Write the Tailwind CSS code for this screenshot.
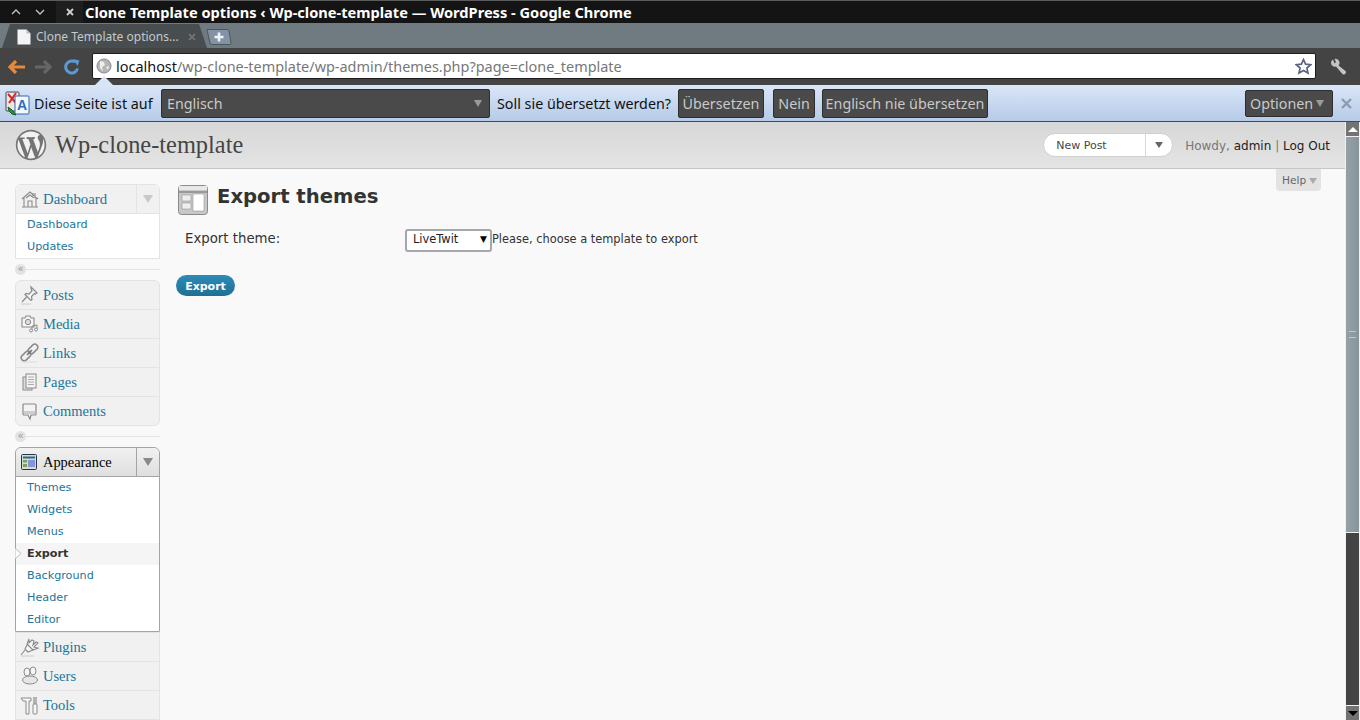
<!DOCTYPE html>
<html lang="en">
<head>
<meta charset="utf-8">
<title>Clone Template options</title>
<script src="https://cdn.jsdelivr.net/npm/@tailwindcss/browser@4"></script>
</head>
<body class="w-[1360px] h-[720px] overflow-hidden bg-[#f9f9f9] font-['Noto_Sans',sans-serif]">
<!-- title bar -->
<header class="h-[23px] bg-[#141414] border-t border-[#5c5c5c] flex items-center text-white">
  <div class="w-[56px] h-full flex items-center justify-around pl-1 pr-1 text-[#bbb]">
    <svg class="w-[10px] h-[6px]" viewBox="0 0 10 6"><path d="M1 5l4-4 4 4" fill="none" stroke="#c4c4c4" stroke-width="1.3"/></svg>
    <svg class="w-[10px] h-[6px]" viewBox="0 0 10 6"><path d="M1 1l4 4 4-4" fill="none" stroke="#c4c4c4" stroke-width="1.3"/></svg>
  </div>
  <div class="w-[27px] h-full flex items-center justify-center bg-[#1e1e1e]">
    <svg class="w-[8px] h-[8px]" viewBox="0 0 8 8"><path d="M1 1l6 6M7 1l-6 6" stroke="#d0d0d0" stroke-width="1.8"/></svg>
  </div>
  <span class="ml-[2px] text-[14.62px] font-bold whitespace-nowrap leading-none">Clone Template options ‹ Wp-clone-template — WordPress - Google Chrome</span>
</header>
<!-- tab strip -->
<div class="h-[25px] bg-[#6f7b80] flex items-end">
  <div class="ml-[2px] w-[205px] h-[24px] pt-[2px] bg-[#484d4f] [clip-path:polygon(0_100%,8px_0,197px_0,100%_100%)] flex items-center pl-[15px]">
    <svg class="w-[14px] h-[16px] shrink-0" viewBox="0 0 14 16"><path d="M0.5 0.5h9l4 4v11h-13z" fill="#f4f4f4"/><path d="M9.5 .5v4h4" fill="#bbb"/></svg>
    <span class="ml-[5px] text-[12px] text-[#c5c9ca] whitespace-nowrap">Clone Template options...</span>
    <svg class="ml-[9px] w-[8px] h-[8px]" viewBox="0 0 8 8"><path d="M1 1l6 6M7 1l-6 6" stroke="#777" stroke-width="1.6"/></svg>
  </div>
  <svg class="-ml-[1px] mb-[3px] w-[26px] h-[16px]" viewBox="0 0 26 16"><path d="M1 .5h20a2 2 0 0 1 2 1.500l2 12a1 1 0 0 1-1 1.500H6a2 2 0 0 1-2-1.500z" fill="#8492a6" stroke="#4d575b"/><path d="M13 3.500v9M8.500 8h9" stroke="#eef3fa" stroke-width="2.600"/></svg>
</div>
<!-- toolbar -->
<div class="h-[37px] bg-[#444444] flex items-center relative">
  <svg class="ml-[8px] w-[18px] h-[14px]" viewBox="0 0 18 14"><path d="M8 1L2 7l6 6M2 7h15" fill="none" stroke="#e58a3c" stroke-width="3.2"/></svg>
  <svg class="ml-[8px] w-[18px] h-[14px]" viewBox="0 0 18 14"><path d="M10 1l6 6-6 6M16 7H1" fill="none" stroke="#666" stroke-width="3.2"/></svg>
  <svg class="ml-[12px] w-[16px] h-[16px]" viewBox="0 0 16 16"><path d="M13.5 9.5A6 6 0 1 1 11 3" fill="none" stroke="#5a9ad6" stroke-width="3"/><path d="M9 0l6.500 1.500-2 5.500z" fill="#5a9ad6"/></svg>
  <div class="ml-[12px] w-[1224px] h-[26px] bg-white border border-[#1c1c1c] rounded-[2px] flex items-center pl-[3px] mb-[1px]">
    <svg class="w-[16px] h-[16px] shrink-0" viewBox="0 0 16 16"><circle cx="8" cy="8" r="7" fill="#b5b5b5" stroke="#8a8a8a"/><path d="M4 3l4 1 1 3-3 2 1 4-3-3zM10 9l3-1-1 4z" fill="#eee"/></svg>
    <span class="ml-[4px] pt-[2px] text-[14.44px] whitespace-nowrap text-[#111]">localhost<span class="text-[#777]">/wp-clone-template/wp-admin/themes.php?page=clone_template</span></span>
    <svg class="ml-auto mr-[3px] w-[17px] h-[17px]" viewBox="0 0 17 17"><path d="M8.500 1.500l2.100 4.700 5.100.5-3.800 3.400 1.100 5-4.500-2.600L4 15.100l1.100-5L1.300 6.700l5.100-.5z" fill="#fff" stroke="#5d6580" stroke-width="1.700"/></svg>
  </div>
  <svg class="ml-[14px] w-[17px] h-[17px]" viewBox="0 0 17 17"><path d="M3 1.500a4 4 0 0 0-2 3.500 4 4 0 0 0 5 3.500l6 7a2 2 0 0 0 3.500-2.500l-7-5.500A4 4 0 0 0 4.500 1L6 4 4.500 5.500z" fill="#c2c5c6"/></svg>
  <!-- arrow joining the infobar -->
  <div class="absolute left-[95px] top-[28px] w-0 h-0 border-l-[9px] border-r-[9px] border-b-[9px] border-l-transparent border-r-transparent border-b-[#d7e4f6]"></div>
</div>
<!-- translate bar -->
<div class="h-[37px] pt-px bg-gradient-to-b from-[#d9e6f7] to-[#b6cbe8] border-b border-[#3d4a5c] flex items-center text-[14.3px] text-[#111] whitespace-nowrap">
  <svg class="ml-[5px] w-[25px] h-[25px] shrink-0" viewBox="0 0 25 25">
    <rect x="1" y="1" width="13" height="19" rx="1" fill="#e8e8e8" stroke="#445"/>
    <path d="M3 3l8 9M11 2L4 12" stroke="#d22" stroke-width="2"/>
    <rect x="10" y="5" width="14" height="18" rx="1" fill="#f4f8ff" stroke="#36a"/>
    <text x="17" y="19" text-anchor="middle" font-size="14" font-weight="700" fill="#2a6fc0" font-family="Liberation Sans">A</text>
    <path d="M3 16l4 3 4 5-4-1-3-3z" fill="#2a9a3a" stroke="#165a20"/>
  </svg>
  <span class="ml-[4px] w-[120px]">Diese Seite ist auf</span>
  <div class="ml-[7px] w-[329px] h-[29px] bg-[#4a4a4a] border border-[#2e2e2e] rounded-[2px] flex items-center pl-[5px] pr-[7px] text-[#c9c9c9]">
    <span>Englisch</span>
    <span class="ml-auto w-0 h-0 border-l-[4px] border-r-[4px] border-t-[7px] border-l-transparent border-r-transparent border-t-[#9a9a9a]"></span>
  </div>
  <span class="ml-[7px] w-[174px]">Soll sie übersetzt werden?</span>
  <div class="ml-[7px] h-[29px] w-[86px] bg-[#4a4a4a] border border-[#2e2e2e] rounded-[2px] flex items-center justify-center text-[#c9c9c9]">Übersetzen</div>
  <div class="ml-[9px] h-[29px] w-[42px] bg-[#4a4a4a] border border-[#2e2e2e] rounded-[2px] flex items-center justify-center text-[#c9c9c9]">Nein</div>
  <div class="ml-[7px] h-[29px] w-[166px] bg-[#4a4a4a] border border-[#2e2e2e] rounded-[2px] flex items-center justify-center text-[#c9c9c9]">Englisch nie übersetzen</div>
  <div class="ml-[257px] h-[27px] w-[88px] bg-[#4a4a4a] border border-[#2e2e2e] rounded-[2px] flex items-center pl-[4px] text-[#c9c9c9]">Optionen
    <span class="ml-[3px] w-0 h-0 border-l-[4px] border-r-[4px] border-t-[7px] border-l-transparent border-r-transparent border-t-[#9a9a9a]"></span>
  </div>
  <svg class="ml-[8px] w-[11px] h-[11px]" viewBox="0 0 11 11"><path d="M1 1l9 9M10 1l-9 9" stroke="#8d9bb0" stroke-width="2.400"/></svg>
</div>
<!-- viewport -->
<div class="h-[598px] flex overflow-hidden">
  <div class="w-[1345px] flex flex-col">
    <div class="h-[47px] shrink-0 bg-gradient-to-b from-[#d7d7d7] to-[#e4e4e4] border-b border-[#c6c6c6] flex items-center pl-[15px] font-['DejaVu_Sans',sans-serif]">
      <svg class="w-[32px] h-[32px]" viewBox="-0.5 -0.5 21 21"><circle cx="10" cy="10" r="10" fill="#f1f1f1"/><path fill="#747474" d="M20 10c0-5.510-4.490-10-10-10C4.480 0 0 4.490 0 10c0 5.520 4.480 10 10 10 5.510 0 10-4.480 10-10zM7.780 15.370L4.370 6.220c.55-.02 1.170-.08 1.170-.08.5-.06.44-1.130-.06-1.110 0 0-1.450.11-2.370.11-.18 0-.37 0-.58-.01C4.120 2.690 6.870 1.110 10 1.110c2.330 0 4.450.87 6.050 2.340-.68-.11-1.650.39-1.650 1.580 0 .74.45 1.360.9 2.100.35.61.55 1.360.55 2.460 0 1.490-1.400 5-1.400 5l-3.030-8.370c.54-.02.82-.17.82-.17.5-.05.44-1.250-.06-1.220 0 0-1.440.12-2.380.12-.87 0-2.330-.12-2.330-.12-.5-.03-.56 1.200-.06 1.220l.92.08 1.260 3.410zM17.410 10c.24-.64.74-1.870.43-4.250.7 1.290 1.050 2.710 1.050 4.250 0 3.290-1.730 6.240-4.400 7.780.97-2.590 1.940-5.200 2.920-7.780zM6.100 18.090C3.120 16.650 1.110 13.530 1.110 10c0-1.300.23-2.480.72-3.590C3.250 10.300 4.670 14.200 6.100 18.090zm4.030-6.630l2.580 6.980c-.86.29-1.760.45-2.710.45-.79 0-1.570-.11-2.290-.33.81-2.380 1.620-4.740 2.420-7.100z"/></svg>
      <span class="ml-[8px] text-[24.4px] text-[#464646] font-['Liberation_Serif',serif]">Wp-clone-template</span>
      <div class="ml-auto w-[130px] h-[24px] bg-white border border-[#d0d0d0] rounded-full flex items-center text-[11px] text-[#464646]">
        <span class="pl-[12px] pt-[2px] flex-1">New Post</span>
        <span class="w-[27px] h-full border-l border-[#d8d8d8] flex items-center justify-center"><span class="w-0 h-0 border-l-[4px] border-r-[4px] border-t-[6px] border-l-transparent border-r-transparent border-t-[#666]"></span></span>
      </div>
      <span class="ml-[12px] mr-[15px] pt-[1px] text-[12px] text-[#777] whitespace-nowrap">Howdy, <span class="text-[#222]">admin</span> | <span class="text-[#222]">Log Out</span></span>
    </div>
    <div class="flex-1 flex relative font-['DejaVu_Sans',sans-serif]">
      <!-- sidebar -->
      <nav class="ml-[15px] w-[145px] pt-[15px] shrink-0">
        <div class="border border-[#e3e3e3] rounded-t-[6px] bg-white">
          <div class="h-[29px] bg-[#f1f1f1] border-b border-[#e3e3e3] rounded-t-[6px] flex items-center relative">
            <svg class="absolute left-[5px] top-[5px] w-[18px] h-[18px]" viewBox="0 0 18 18"><path d="M1 9l8-7 8 7M3 8v9h12V8M7 17v-6h4v6M12 3v3M14 3v5M5 8l4-3 4 3M1 17h16" fill="none" stroke="#8a8a8a" stroke-width="1.100"/></svg>
            <span class="ml-[27px] text-[14.8px] text-[#21759b] font-['Liberation_Serif',serif]">Dashboard</span>
            <span class="ml-auto w-[23px] h-full border-l border-[#e3e3e3] flex items-center justify-center"><span class="w-0 h-0 border-l-[5px] border-r-[5px] border-t-[8px] border-l-transparent border-r-transparent border-t-[#c9c9c9]"></span></span>
          </div>
          <div class="text-[11.2px] text-[#21759b]">
            <div class="h-[22px] pl-[11px] flex items-center">Dashboard</div>
            <div class="h-[22px] pl-[11px] flex items-center">Updates</div>
          </div>
        </div>
        <div class="h-[21px] flex items-center relative"><div class="w-full border-t border-[#e3e3e3]"></div><span class="absolute left-0 w-[11px] h-[11px] rounded-full bg-[#e3e3e3] text-[10px] leading-[9px] text-center text-[#999]">«</span></div>
        <div class="border border-[#e3e3e3] rounded-[6px] bg-[#f1f1f1] text-[14.5px] text-[#21759b] font-['Liberation_Serif',serif]">
          <div class="h-[29px] border-b border-[#e3e3e3] flex items-center relative">
            <svg class="absolute left-[4px] top-[4px] w-[20px] h-[20px]" viewBox="0 0 20 20"><path d="M11 2l6 6-1.500 1-1-.5-3 3 .5 3-1 1-6-6 1-1 3 .5 3-3-.5-1zM6.500 12L2 17" fill="#f6f6f6" stroke="#8a8a8a" stroke-width="1.200"/><path d="M1 19h10" stroke="#ccc"/></svg>
            <span class="ml-[27px] pt-[2px]">Posts</span></div>
          <div class="h-[29px] border-b border-[#e3e3e3] flex items-center relative">
            <svg class="absolute left-[5px] top-[5px] w-[18px] h-[18px]" viewBox="0 0 18 18"><path d="M1 3h3l1-2h4l1 2h3v9H1z" fill="#f6f6f6" stroke="#8a8a8a" stroke-width="1.100"/><circle cx="7" cy="7" r="2.700" fill="#ddd" stroke="#8a8a8a"/><path d="M11 15V11l5-1v4" fill="none" stroke="#8a8a8a"/><circle cx="10" cy="15.500" r="1.500" fill="#f6f6f6" stroke="#8a8a8a"/><circle cx="15" cy="14.500" r="1.500" fill="#f6f6f6" stroke="#8a8a8a"/></svg>
            <span class="ml-[27px] pt-[2px]">Media</span></div>
          <div class="h-[29px] border-b border-[#e3e3e3] flex items-center relative">
            <svg class="absolute left-[4px] top-[4px] w-[20px] h-[20px]" viewBox="0 0 20 20"><rect x="-5.500" y="-3" width="11" height="6" rx="3" transform="translate(13 6) rotate(-45)" fill="none" stroke="#8a8a8a" stroke-width="1.500"/><rect x="-5.500" y="-3" width="11" height="6" rx="3" transform="translate(6 13) rotate(-45)" fill="none" stroke="#8a8a8a" stroke-width="1.500"/><path d="M7 12l5-5" stroke="#777" stroke-width="1.600"/><path d="M2 19h15" stroke="#ddd"/></svg>
            <span class="ml-[27px] pt-[2px]">Links</span></div>
          <div class="h-[29px] border-b border-[#e3e3e3] flex items-center relative">
            <svg class="absolute left-[6px] top-[5px] w-[16px] h-[18px]" viewBox="0 0 16 18"><rect x="1" y="4" width="9" height="13" fill="#ddd" stroke="#8a8a8a"/><rect x="4" y="1" width="10" height="14" fill="#f4f4f4" stroke="#8a8a8a"/><path d="M6 4h6M6 6.500h6M6 9h6M6 11.500h6" stroke="#aaa"/></svg>
            <span class="ml-[27px] pt-[2px]">Pages</span></div>
          <div class="h-[28px] flex items-center relative">
            <svg class="absolute left-[6px] top-[6px] w-[16px] h-[18px]" viewBox="0 0 16 18"><path d="M2 1h11a1 1 0 0 1 1 1v9a1 1 0 0 1-1 1H9l-1 4-2-4H2a1 1 0 0 1-1-1V2a1 1 0 0 1 1-1z" fill="#f3f3f3" stroke="#8a8a8a" stroke-width="1.200"/><path d="M2 8h11v3H2z" fill="#ccc"/></svg>
            <span class="ml-[27px] pt-[2px]">Comments</span></div>
        </div>
        <div class="h-[21px] flex items-center relative"><div class="w-full border-t border-[#e3e3e3]"></div><span class="absolute left-0 w-[11px] h-[11px] rounded-full bg-[#e3e3e3] text-[10px] leading-[9px] text-center text-[#999]">«</span></div>
        <div class="border border-[#a4a4a4] rounded-t-[6px] bg-white">
          <div class="h-[29px] bg-gradient-to-b from-[#f1f1f1] to-[#dfdfdf] border-b border-[#a4a4a4] rounded-t-[6px] flex items-center relative">
            <svg class="absolute left-[5px] top-[6px] w-[16px] h-[16px]" viewBox="0 0 16 16"><rect x=".5" y=".5" width="15" height="15" rx="1" fill="#cfe0d0" stroke="#23364a"/><rect x="2" y="2.500" width="12" height="2" fill="#39638c"/><rect x="2" y="6" width="4" height="2.500" fill="#7ba05b"/><rect x="2" y="10" width="4" height="3" fill="#7ba05b"/><rect x="7" y="6" width="7" height="7" fill="#8b93d8"/></svg>
            <span class="ml-[27px] pt-[2px] text-[14.4px] text-black font-['Liberation_Serif',serif]">Appearance</span>
            <span class="ml-auto w-[23px] h-full border-l border-[#a4a4a4] flex items-center justify-center"><span class="w-0 h-0 border-l-[5px] border-r-[5px] border-t-[8px] border-l-transparent border-r-transparent border-t-[#888]"></span></span>
          </div>
          <div class="text-[11.2px] text-[#21759b]">
            <div class="h-[22px] pl-[11px] flex items-center">Themes</div>
            <div class="h-[22px] pl-[11px] flex items-center">Widgets</div>
            <div class="h-[22px] pl-[11px] flex items-center">Menus</div>
            <div class="h-[22px] pl-[11px] flex items-center bg-[#f5f5f5] font-bold text-[#333] relative">
              <svg class="absolute -left-px top-[5px] w-[6px] h-[11px]" viewBox="0 0 6 11"><path d="M0 0l6 5.500L0 11z" fill="#fff" stroke="#bbb"/></svg>Export</div>
            <div class="h-[22px] pl-[11px] flex items-center">Background</div>
            <div class="h-[22px] pl-[11px] flex items-center">Header</div>
            <div class="h-[22px] pl-[11px] flex items-center">Editor</div>
          </div>
        </div>
        <div class="border-x border-[#e3e3e3] bg-[#f1f1f1] text-[14.500px] text-[#21759b] font-['Liberation_Serif',serif]">
          <div class="h-[30px] border-y border-[#e3e3e3] flex items-center relative">
            <svg class="absolute left-[4px] top-[4px] w-[20px] h-[20px]" viewBox="0 0 20 20"><path d="M9 2L7 7l6 6 5-2-4-1 4-4-2-1-3 3 1-4-2-1-3 3zM7 8l-2 4 3 3 5-2M5 13l-4 5" fill="#f6f6f6" stroke="#8a8a8a" stroke-width="1.100"/><path d="M1 19h13" stroke="#ccc"/></svg>
            <span class="ml-[27px] pt-[2px]">Plugins</span></div>
          <div class="h-[29px] border-b border-[#e3e3e3] flex items-center relative">
            <svg class="absolute left-[5px] top-[4px] w-[18px] h-[19px]" viewBox="0 0 18 19"><ellipse cx="6" cy="6" rx="3" ry="4" fill="#f6f6f6" stroke="#8a8a8a"/><ellipse cx="12" cy="5" rx="3" ry="4" fill="#f6f6f6" stroke="#8a8a8a"/><ellipse cx="9" cy="14" rx="7.500" ry="4" fill="#e6e6e6" stroke="#8a8a8a"/></svg>
            <span class="ml-[27px] pt-[2px]">Users</span></div>
          <div class="h-[29px] border-b border-[#e3e3e3] flex items-center relative">
            <svg class="absolute left-[4px] top-[5px] w-[19px] h-[19px]" viewBox="0 0 19 19"><path d="M1 2h10v3H9v13H6V5H3z" fill="#f6f6f6" stroke="#8a8a8a"/><path d="M14 1v7M16 1v7" stroke="#777"/><rect x="13" y="8" width="4" height="10" rx="1" fill="#f6f6f6" stroke="#8a8a8a"/></svg>
            <span class="ml-[27px] pt-[2px]">Tools</span></div>
        </div>
      </nav>
      <!-- content -->
      <main class="ml-[16px] flex-1 text-[#333]">
        <div class="mt-[16px] flex">
          <svg class="ml-[2px] w-[31px] h-[32px] shrink-0" viewBox="0 0 31 32"><rect x=".5" y=".5" width="29" height="29" rx="3" fill="#c8c8c8" stroke="#8a8a8a"/><rect x="1" y="1" width="28" height="4" fill="#e8e8e8"/><rect x="1" y="6" width="28" height="2" fill="#999"/><rect x="15" y="9" width="11" height="17" fill="#fff" stroke="#888" stroke-width=".5"/><rect x="4" y="10" width="9" height="6" fill="#eee" stroke="#888" stroke-width=".5"/><rect x="4" y="18" width="9" height="6" fill="#eee" stroke="#888" stroke-width=".5"/></svg>
          <h1 class="ml-[8px] text-[19.6px] leading-[24px] font-bold text-[#333]">Export themes</h1>
        </div>
        <div class="mt-[12px] ml-[9px] flex items-center h-[22px]">
          <span class="w-[221px] -mt-[2px] text-[13.3px]">Export theme:</span>
          <div class="w-[87px] h-[23px] -ml-px bg-white border-2 border-[#a4a8ab] rounded-[3px] flex items-center pl-[6px] text-[11.400px] text-[#222]">LiveTwit<span class="ml-auto mr-[3px] text-[9px] text-black">▼</span></div>
          <span class="text-[11.4px]">Please, choose a template to export</span>
        </div>
        <div class="mt-[24px] pt-[3px] w-[59px] h-[21px] rounded-full bg-gradient-to-b from-[#2c8cb8] to-[#1f6f94] text-white text-[11px] font-bold flex items-center justify-center">Export</div>
      </main>
      <div class="absolute right-[24px] top-0 w-[45px] h-[22px] pt-[2px] bg-[#e3e3e3] rounded-b-[4px] flex items-center pl-[6px] text-[10.6px] text-[#666]">Help<span class="ml-[3px] w-0 h-0 border-l-[4px] border-r-[4px] border-t-[6px] border-l-transparent border-r-transparent border-t-[#aaa]"></span></div>
    </div>
  </div>
  <!-- scrollbar -->
  <div class="w-[15px] pl-px pr-px flex flex-col bg-[#f1f1f1]">
    <div class="h-[14px] bg-[#737373] flex items-center justify-center"><span class="w-0 h-0 border-l-[5px] border-r-[5px] border-b-[5px] border-l-transparent border-r-transparent border-b-white"></span></div>
    <div class="h-[395px] mt-px bg-gradient-to-r from-[#94a2a7] to-[#87959a] flex items-center justify-center"><div class="w-[7px] h-[7px] border-y border-[#c0c8cb]"></div></div>
    <div class="h-[172px] mt-px bg-[#444]"></div>
    <div class="h-[14px] mt-px bg-[#737373] flex items-center justify-center"><span class="w-0 h-0 border-l-[5px] border-r-[5px] border-t-[5px] border-l-transparent border-r-transparent border-t-black"></span></div>
  </div>
</div>
</body>
</html>
